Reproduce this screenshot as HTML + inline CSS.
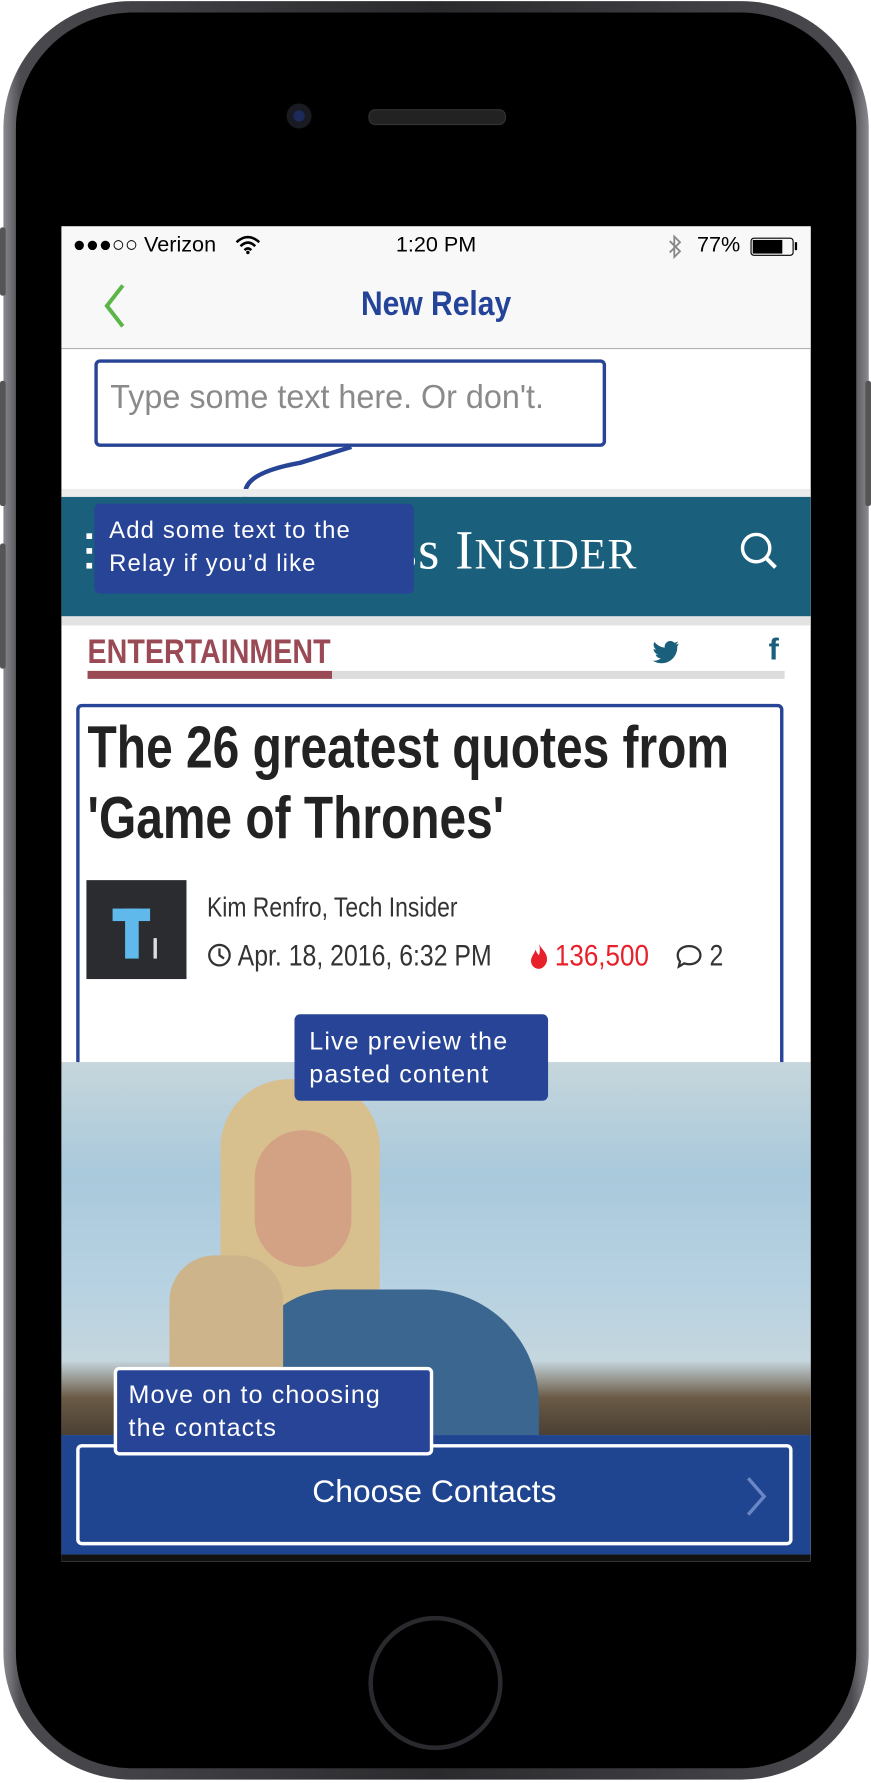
<!DOCTYPE html>
<html><head><style>
html,body{margin:0;padding:0;background:#fff;width:871px;height:1783px;overflow:hidden}
#w{position:absolute;left:0;top:0;width:766px;height:1568px;transform:scale(1.13708,1.13712);transform-origin:0 0;font-family:"Liberation Sans",sans-serif}
.a{position:absolute}
.n{transform-origin:0 0;white-space:nowrap}
.tip{position:absolute;background:#284496;color:#fff;border-radius:5px;font-size:22px;line-height:29px;letter-spacing:1px;padding:0 13px;box-sizing:border-box;white-space:nowrap}
</style></head><body><div id="w">
<div class="a" style="left:3px;top:1px;width:761px;height:1564px;border-radius:112px;background:linear-gradient(90deg,#8a8b90,#4a4a4f 2%,#2a2a2d 50%,#4a4a4f 98%,#8a8b90)"></div>
<div class="a" style="left:14px;top:11px;width:739px;height:1544px;border-radius:102px;background:#000"></div>
<div class="a" style="left:0;top:200px;width:5px;height:60px;background:#555;border-radius:2px"></div>
<div class="a" style="left:0;top:335px;width:5px;height:110px;background:#555;border-radius:2px"></div>
<div class="a" style="left:0;top:478px;width:5px;height:110px;background:#555;border-radius:2px"></div>
<div class="a" style="left:761px;top:335px;width:5px;height:110px;background:#555;border-radius:2px"></div>
<div class="a" style="left:324px;top:96px;width:119px;height:12px;border-radius:6px;background:#222;border:1px solid #333"></div>
<div class="a" style="left:252px;top:91px;width:22px;height:22px;border-radius:50%;background:#1a1a22"></div>
<div class="a" style="left:258px;top:97px;width:10px;height:10px;border-radius:50%;background:#1b2a5a"></div>
<div class="a" style="left:324px;top:1421px;width:118px;height:118px;border-radius:50%;border:4px solid #2a2a2e;box-sizing:border-box"></div>
<div class="a" style="left:54px;top:199px;width:659px;height:1174px;background:#fff;overflow:hidden">
  <div class="a" style="left:0;top:0;width:659px;height:107px;background:#f8f8f8;border-bottom:1px solid #b2b2b2"></div>
  <div class="a n" style="left:10px;top:6px;font-size:19px;color:#000">●●●○○ Verizon</div>
  <svg class="a" style="left:153px;top:8px" width="22" height="17"><path d="M1 6 Q11 -3 21 6 M4.5 9.5 Q11 3 17.5 9.5 M8 13 Q11 10 14 13" stroke="#000" stroke-width="2.2" fill="none"/><circle cx="11" cy="15" r="1.5"/></svg>
  <div class="a n" style="left:0;top:6px;width:659px;text-align:center;font-size:19px">1:20 PM</div>
  <svg class="a" style="left:533px;top:6px" width="14" height="24"><path d="M2 7 L11 16 L6 21 V3 L11 8 L2 17" stroke="#888" stroke-width="1.6" fill="none"/></svg>
  <div class="a n" style="left:559px;top:6px;font-size:19px">77%</div>
  <div class="a" style="left:606px;top:10px;width:36px;height:14px;border:1px solid #000;border-radius:3px"><div style="width:26px;height:12px;margin:1px;background:#000"></div></div>
  <div class="a" style="left:645px;top:14px;width:2px;height:7px;background:#000"></div>
  <svg class="a" style="left:34px;top:50px" width="24" height="40"><path d="M20 2 L6 20 L20 38" stroke="#5bb548" stroke-width="3.5" fill="none"/></svg>
  <div class="a n" style="left:0;top:52px;width:659px;text-align:center;font-size:30px;color:#24449a;font-weight:bold;transform:scaleX(.88);transform-origin:50% 0">New Relay</div>
  <div class="a" style="left:29px;top:117px;width:450px;height:77px;border:3px solid #284496;border-radius:5px;box-sizing:border-box;background:#fff"></div>
  <div class="a n" style="left:43px;top:135px;font-size:29px;color:#8a8a8a;transform:scaleX(.98)">Type some text here. Or don't.</div>
  <svg class="a" style="left:150px;top:192px" width="110" height="60"><path d="M105 2 L60 16 Q15 24 12 40 L10 58" stroke="#284496" stroke-width="4" fill="none"/></svg>
  <div class="a" style="left:0;top:231px;width:659px;height:7px;background:#ececec"></div>
  <div class="a" style="left:0;top:238px;width:659px;height:105px;background:#1a5f7b"></div>
  <div class="a" style="left:22px;top:270px;width:5px;height:5px;background:#fff;box-shadow:0 13px 0 #fff,0 26px 0 #fff"></div>
  <div class="a" style="left:294px;top:258px;font-family:'Liberation Serif',serif;font-size:48px;color:#fff;white-space:nowrap;letter-spacing:1px">ss I<span style="font-size:38px">NSIDER</span></div>
  <svg class="a" style="left:596px;top:268px" width="36" height="36"><circle cx="15" cy="15" r="12" stroke="#fff" stroke-width="3" fill="none"/><path d="M23 23 L32 32" stroke="#fff" stroke-width="3.5"/></svg>
  <div class="a" style="left:0;top:343px;width:659px;height:8px;background:#e3e3e3"></div>
  <div class="a n" style="left:23px;top:358px;font-size:30px;font-weight:bold;color:#9a4a55;transform:scaleX(.84)">ENTERTAINMENT</div>
  <div class="a" style="left:23px;top:391px;width:613px;height:7px;background:#dcdcdc"></div>
  <div class="a" style="left:23px;top:391px;width:215px;height:7px;background:#9a4a55"></div>
  <svg class="a" style="left:520px;top:363px" width="24" height="22"><path d="M23 4c-1 .4-2 .7-3 .8 1-.6 2-1.6 2.3-2.8-1 .6-2 1-3.2 1.2A5 5 0 0 0 10.6 7.6 14 14 0 0 1 1.5 2.6a5 5 0 0 0 1.5 6.6c-.8 0-1.6-.3-2.2-.6 0 2.4 1.7 4.4 4 4.9-.7.2-1.5.2-2.2.1.6 2 2.4 3.4 4.6 3.4A10 10 0 0 1 0 19a14 14 0 0 0 21.6-12.6C22 5.7 22.6 5 23 4z" fill="#1a5f7b"/></svg>
  <div class="a" style="left:622px;top:357px;font-size:27px;font-weight:bold;color:#1a5f7b">f</div>
  <div class="a" style="left:13px;top:420px;width:622px;height:597px;border:3px solid #284496;border-radius:5px;box-sizing:border-box"></div>
  <div class="a n" style="left:23px;top:428px;font-size:52px;line-height:62px;font-weight:bold;color:#222;transform:scaleX(.81)">The 26 greatest quotes from<br>'Game of Thrones'</div>
  <div class="a" style="left:22px;top:575px;width:88px;height:87px;background:#2a2c30"></div>
  <div class="a" style="left:45px;top:600px;width:33px;height:11px;background:#5fb9ea"></div>
  <div class="a" style="left:56px;top:600px;width:12px;height:44px;background:#5fb9ea"></div>
  <div class="a" style="left:81px;top:626px;width:3px;height:18px;background:#ddd"></div>
  <div class="a n" style="left:128px;top:586px;font-size:24px;color:#333;transform:scaleX(.84)">Kim Renfro, Tech Insider</div>
  <svg class="a" style="left:128px;top:630px" width="22" height="22"><circle cx="11" cy="11" r="9" stroke="#333" stroke-width="2" fill="none"/><path d="M11 5 V11 L15 14" stroke="#333" stroke-width="2" fill="none"/></svg>
  <div class="a n" style="left:155px;top:626px;font-size:26px;color:#333;transform:scaleX(.84)">Apr. 18, 2016, 6:32 PM</div>
  <svg class="a" style="left:411px;top:630px" width="18" height="24"><path d="M9 1 C11 6 17 9 16 16 C15 21 11 23 9 23 C5 23 2 20 2 16 C2 12 5 10 6 6 C7 9 8 10 9 11 C10 8 10 5 9 1z" fill="#e8202a"/></svg>
  <div class="a n" style="left:434px;top:626px;font-size:26px;color:#e8202a;transform:scaleX(.88)">136,500</div>
  <svg class="a" style="left:540px;top:631px" width="24" height="22"><path d="M12 2 C18 2 22 5.5 22 10 C22 14.5 18 18 12 18 C10.5 18 9 17.7 7.7 17.2 L3 20 L4 15.5 C2.7 14 2 12 2 10 C2 5.5 6 2 12 2z" stroke="#333" stroke-width="2" fill="none"/></svg>
  <div class="a n" style="left:570px;top:626px;font-size:26px;color:#333;transform:scaleX(.84)">2</div>
  <div class="a" style="left:0;top:735px;width:659px;height:328px;background:linear-gradient(180deg,#c6d6dc 0%,#a9c9dc 30%,#b7d2e2 60%,#c5d6de 80%,#6a5a46 90%,#4b4034 100%);overflow:hidden">
    <div class="a" style="left:140px;top:15px;width:140px;height:220px;border-radius:60px 60px 40px 40px;background:#d8bf8e"></div>
    <div class="a" style="left:170px;top:60px;width:85px;height:120px;border-radius:42px;background:#d3a183"></div>
    <div class="a" style="left:160px;top:200px;width:260px;height:160px;border-radius:80px 100px 0 0;background:#3a6690"></div>
    <div class="a" style="left:95px;top:170px;width:100px;height:170px;border-radius:40px;background:#cdb48a"></div>
  </div>
  <div class="tip" style="left:205px;top:693px;width:223px;height:76px;padding-top:9px">Live preview the<br>pasted content</div>
  <div class="tip" style="left:29px;top:244px;width:281px;height:79px;padding-top:9px;font-size:21px">Add some text to the<br>Relay if you’d like</div>
  <div class="a" style="left:0;top:1063px;width:659px;height:105px;background:#1f4590"></div>
  <div class="a" style="left:13px;top:1071px;width:630px;height:89px;border:3px solid #fff;border-radius:5px;box-sizing:border-box"></div>
  <div class="a" style="left:13px;top:1097px;width:630px;text-align:center;font-size:28px;color:#fff">Choose Contacts</div>
  <svg class="a" style="left:600px;top:1099px" width="24" height="36"><path d="M4 2 L18 18 L4 34" stroke="#6a86c6" stroke-width="3" fill="none"/></svg>
  <div class="tip" style="left:46px;top:1003px;width:281px;height:78px;border:3px solid #fff;padding-top:7px;padding-left:10px">Move on to choosing<br>the contacts</div>
  <div class="a" style="left:0;top:1168px;width:659px;height:6px;background:#111"></div>
</div>
</div></body></html>
